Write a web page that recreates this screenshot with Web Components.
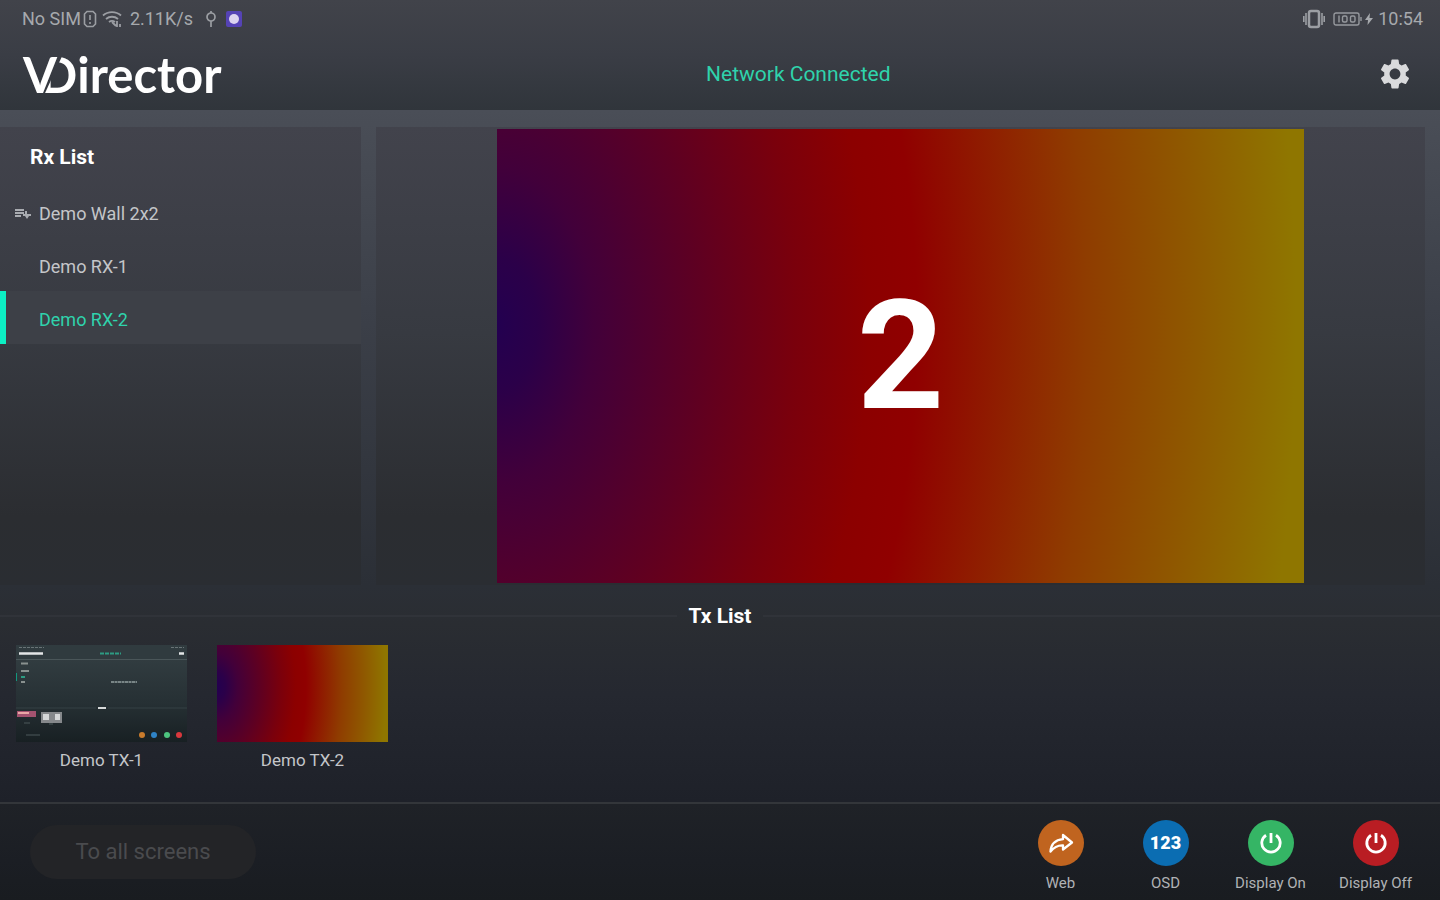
<!DOCTYPE html>
<html lang="en">
<head>
<meta charset="utf-8">
<meta name="viewport" content="width=device-width, initial-scale=1">
<title>VDirector</title>
<style>
html, body { margin: 0; height: 100%; }
body {
  font-family: Roboto, "Liberation Sans", sans-serif;
  color: #c4c6c9;
  background: #1a1d22;
  --accent: #2fd3ac;
  --demo-picture: radial-gradient(ellipse 100% 290% at 0 43%, #230050 0%, #2b0049 5%, #42003a 12%, #5e0022 25%, #7a000c 37%, #8c0000 46%, #900000 52%, #8f3c00 73%, #8f5800 86%, #8f7600 99%);
}
</style>
</head>
<body>
<v-director></v-director>

<script>
const define = (name, html) => {
  const template = document.createElement('template');
  template.innerHTML = '<style>*{box-sizing:border-box}button{font:inherit;color:inherit;border:0;background:none;padding:0;margin:0;cursor:pointer}svg{display:block}</style>' + html;
  customElements.define(name, class extends HTMLElement {
    constructor() {
      super();
      this.attachShadow({ mode: 'open' }).append(template.content.cloneNode(true));
    }
  });
};

/* Device status line */
define('status-bar', `
<style>
:host { display: flex; justify-content: space-between; align-items: center; height: 38px; padding: 0 17px 0 22px; font-size: 18px; line-height: 22px; color: #a6a9ad; }
div { display: flex; align-items: center; }
.sim { margin-left: 2px; }
.wifi { margin: 0 8px 0 5px; }
.usb { margin: 0 8px 0 12px; }
.battery { margin: 0 2px 0 8px; }
.bolt { margin-right: 5px; }
</style>
<div>
  <span>No SIM</span>
  <svg class="sim" width="14" height="18" viewBox="0 0 14 18" fill="none" stroke="#9b9ea3" stroke-width="1.6"><path d="M4 1.5h6L12.500 4v10L10 16.500H4L1.500 14V4z"/><path d="M7 5v5M7 12v2"/></svg>
  <svg class="wifi" width="20" height="18" viewBox="0 0 20 18" fill="none" stroke="#9b9ea3" stroke-width="1.800"><path d="M1 5.500c5-4.500 13-4.500 18 0M4 9c3.500-3 8.500-3 12 0M7 12c2-1.500 4-1.500 6 0"/><path d="M10 12l4 4M15 11v6M18 14v3"/></svg>
  <span>2.11K/s</span>
  <svg class="usb" width="12" height="18" viewBox="0 0 12 18" fill="none" stroke="#9b9ea3" stroke-width="1.700"><circle cx="6" cy="7" r="4"/><path d="M6 1v2M6 11v6"/></svg>
  <svg width="18" height="18" viewBox="0 0 18 18"><rect x="1" y="1" width="16" height="16" rx="2" fill="#5543b5"/><circle cx="9" cy="9" r="5" fill="#dcd3ef"/></svg>
</div>
<div>
  <svg width="22" height="20" viewBox="0 0 22 20" fill="none" stroke="#9b9ea3"><rect x="6" y="2" width="10" height="16" rx="2" stroke-width="2.500"/><path d="M3 4v12M19 4v12M.8 7v6M21.200 7v6" stroke-width="1.600"/></svg>
  <svg class="battery" width="30" height="14" viewBox="0 0 30 14" fill="none" stroke="#96999e" stroke-width="1.400"><rect x="1" y="1" width="25" height="12" rx="2"/><path d="M28 5v4M6 3.500v7"/><rect x="9.500" y="4" width="4.500" height="6" rx="1.500"/><rect x="17.500" y="4" width="4.500" height="6" rx="1.500"/></svg>
  <svg class="bolt" width="8" height="12" viewBox="0 0 8 12" fill="#a6a9ad"><path d="M5 0L0 7h3l-.5 5L8 5H4.500z"/></svg>
  <span>10:54</span>
</div>`);

/* Wordmark: the D is cut on a slant that runs parallel to the V's right arm */
define('app-logo', `
<style>
:host { display: block; font: 700 49px/50px Lato, "Open Sans", sans-serif; color: #fff; white-space: nowrap; }
h1 { margin: 0; font: inherit; display: flex; }
.d { margin-left: -17px; clip-path: polygon(68% 0, 100% 0, 100% 100%, 6% 100%); }
</style>
<h1><span>V</span><span class="d">D</span><span>irector</span></h1>`);

define('app-header', `
<style>
:host { display: block; background: linear-gradient(#41434a, #3a3d45 50%, #30353b); }
.bar { display: flex; justify-content: space-between; align-items: center; height: 72px; padding: 0 25px 0 23px; }
.state { font-size: 21px; line-height: 26px; color: var(--accent); }
button { width: 40px; height: 40px; display: grid; place-items: center; }
</style>
<status-bar></status-bar>
<div class="bar">
  <app-logo></app-logo>
  <span class="state" role="status"><slot></slot></span>
  <button aria-label="Settings"><svg width="36" height="36" viewBox="0 0 24 24" fill="#d9dadc"><path d="M19.140 12.940c.04-.3.06-.61.06-.94 0-.32-.02-.64-.07-.94l2.030-1.580c.18-.14.23-.41.12-.61l-1.920-3.320c-.12-.22-.37-.29-.59-.22l-2.390.96c-.5-.38-1.030-.7-1.620-.94l-.36-2.540c-.04-.24-.24-.41-.48-.41h-3.840c-.24 0-.43.17-.47.41l-.36 2.540c-.59.24-1.130.57-1.620.94l-2.390-.96c-.22-.08-.47 0-.59.22L2.740 8.870c-.12.21-.08.47.12.61l2.030 1.580c-.05.3-.09.63-.09.94s.02.64.07.94l-2.030 1.580c-.18.14-.23.41-.12.61l1.920 3.320c.12.22.37.29.59.22l2.390-.96c.5.38 1.030.7 1.620.94l.36 2.540c.05.24.24.41.48.41h3.840c.24 0 .44-.17.47-.41l.36-2.540c.59-.24 1.130-.56 1.620-.94l2.390.96c.22.08.47 0 .59-.22l1.920-3.320c.12-.22.07-.47-.12-.61l-2.010-1.580zM12 15.600c-1.980 0-3.600-1.620-3.600-3.600s1.620-3.600 3.600-3.600 3.600 1.620 3.600 3.600-1.620 3.600-3.600 3.600z"/></svg></button>
</div>`);

define('rx-item', `
<style>
:host { display: block; }
button { display: flex; align-items: center; width: 100%; height: 53px; padding: 4px 0 0 15px; font-size: 18px; line-height: 22px; text-align: left; }
.icon { width: 24px; }
svg { visibility: hidden; }
:host([wall]) svg { visibility: visible; }
:host([selected]) button { color: var(--accent); background: #3d4047; box-shadow: inset 6px 0 #0cf0c4; }
</style>
<button><span class="icon"><svg width="16" height="14" viewBox="0 0 16 14" fill="#a9acb1"><path d="M0 2h9v2H0zM0 5h9v2H0zM0 8h6v2H0zM10 4l2 0v3h4v2h-2l-2 3-2-3H8V7h2z"/></svg></span><slot></slot></button>`);

define('rx-list', `
<style>
:host { display: block; background: linear-gradient(#42434c, #373a41 45%, #2b2d31 85%, #2a2d32); }
h2 { margin: 0; padding: 18px 30px 16px; font-size: 21px; line-height: 24px; font-weight: 700; color: #fff; }
nav { display: block; }
</style>
<h2>Rx List</h2>
<nav aria-label="Rx List"><slot></slot></nav>`);

define('rx-preview', `
<style>
:host { display: flex; justify-content: center; align-items: center; min-width: 0; padding: 2px; background: linear-gradient(#42434c, #373a41 45%, #2b2d31 85%, #2a2d32); }
.picture { height: 100%; max-width: 100%; aspect-ratio: 16 / 9; display: grid; place-items: center; background: var(--demo-picture); color: #fff; font-size: 152px; line-height: 180px; font-weight: 700; }
</style>
<div class="picture"><slot></slot></div>`);

define('tx-item', `
<style>
:host { display: block; width: 171px; }
button { display: block; width: 100%; text-align: center; font-size: 17px; line-height: 22px; }
.thumb { display: block; width: 100%; aspect-ratio: 171 / 97; margin-bottom: 7px; background: var(--demo-picture); }
</style>
<button><slot name="thumb"><span class="thumb"></span></slot><slot></slot></button>`);

/* Miniature of the app's own screen, shown by the first transmitter */
define('screen-thumb', `
<style>:host { display: block; width: 171px; height: 97px; margin-bottom: 7px; }</style>
<svg width="171" height="97" viewBox="0 0 171 97">
  <defs><linearGradient id="g" x2="0" y2="1"><stop stop-color="#354044"/><stop offset=".6" stop-color="#263034"/><stop offset="1" stop-color="#182023"/></linearGradient></defs>
  <rect width="171" height="97" fill="url(#g)"/>
  <rect width="171" height="14" fill="#303b3f"/>
  <path d="M0 14.500h171" stroke="#4a5659"/>
  <path d="M3 2.500h25M155 2.500h13" stroke="#697477" stroke-dasharray="3 1"/>
  <path d="M3 8.500h24M163 8.500h5" stroke="#e3e6e7" stroke-width="2.500"/>
  <path d="M84 8.500h21" stroke="#2d9c83" stroke-width="2" stroke-dasharray="4 1"/>
  <path d="M5 18.500h7M5 26h8M5 37h4" stroke="#89918f" stroke-width="2"/>
  <path d="M.5 28v8" stroke="#12977e"/><path d="M5 32h4" stroke="#2d9c83" stroke-width="2"/>
  <path d="M95 37h26" stroke="#93a0a0" stroke-width="1.500" stroke-dasharray="3 .5"/>
  <path d="M0 63h80M92 63h79" stroke="#354144"/><path d="M82 63h8" stroke="#d7dada" stroke-width="2"/>
  <rect x="1" y="66" width="19" height="6" fill="#a3526f"/><path d="M2 68h11" stroke="#e9a7a6" stroke-width="2"/>
  <rect x="25" y="67" width="21" height="11" fill="#85888b"/><path d="M27 72h6M39 72h5" stroke="#d5d7d8" stroke-width="6"/><path d="M33 79h4M8 78h6M10 90h14" stroke="#4c585a"/>
  <circle cx="126" cy="90" r="3" fill="#c97b2c"/><circle cx="138" cy="90" r="3" fill="#2f83c6"/><circle cx="151" cy="90" r="3" fill="#4dc47f"/><circle cx="163" cy="90" r="3" fill="#d9383d"/>
</svg>`);

define('tx-list', `
<style>
:host { display: block; height: 217px; background: linear-gradient(#2b2f36, #2a2d32 18%, #252830 50%, #1e2129); }
h2 { display: flex; align-items: center; gap: 12px; margin: 0; padding-top: 19px; font-size: 21px; line-height: 24px; font-weight: 700; color: #fff; }
h2::before, h2::after { content: ""; flex: 1; height: 2px; background: #303339; }
.items { display: flex; gap: 30px; padding: 17px 16px 0; }
</style>
<h2>Tx List</h2>
<div class="items"><slot></slot></div>`);

define('round-action', `
<style>
:host { display: block; width: 105px; }
button { display: flex; flex-direction: column; align-items: center; gap: 8px; width: 100%; font-size: 15px; line-height: 18px; color: #b0b2b5; white-space: nowrap; }
.disc { display: grid; place-items: center; width: 46px; height: 46px; border-radius: 50%; background: var(--disc); color: #fff; font-size: 18px; font-weight: 900; }
</style>
<button><span class="disc"><slot name="icon"></slot></span><slot></slot></button>`);

define('power-icon', `
<style>:host { display: block; }</style>
<svg width="24" height="24" viewBox="0 0 24 24" fill="none" stroke="#fff" stroke-width="2.800"><path d="M7 4.200a9.200 9.200 0 1 0 10 0M12 2v10"/></svg>`);

define('share-icon', `
<style>:host { display: block; }</style>
<svg width="26" height="24" viewBox="0 0 26 24" fill="none" stroke="#fff" stroke-width="2.300" stroke-linejoin="round"><path d="M15 4l9 7.500-9 7v-4.200c-5.500-.3-9 1.700-12.500 6.200C3 13.500 7 9 15 8.200z"/></svg>`);

define('app-footer', `
<style>
:host { display: flex; justify-content: space-between; align-items: flex-start; height: 98px; padding: 0 12px 0 30px; border-top: 2px solid #33363a; background: linear-gradient(#1f2227, #1b1e24 60%, #191c20); }
.all { margin-top: 21px; width: 226px; height: 54px; border-radius: 27px; background: #232427; color: #4a4b4e; font-size: 22px; line-height: 26px; }
.actions { display: flex; padding-top: 16px; }
</style>
<button class="all" aria-disabled="true">To all screens</button>
<div class="actions"><slot></slot></div>`);

define('v-director', `
<style>
:host { display: flex; flex-direction: column; min-height: 100vh; }
main { flex: 1; display: grid; grid-template-columns: minmax(0, 361fr) minmax(0, 1049fr); column-gap: 15px; padding: 17px 15px 0 0; background: linear-gradient(#4a4e57, #3b3f48 45%, #2b2f36); }
rx-preview { height: calc(100vh - 442px); min-height: 260px; }
.web { --disc: #c0641f; } .osd { --disc: #0b6db2; } .on { --disc: #35b565; } .off { --disc: #b91d23; }
</style>
<app-header>Network Connected</app-header>
<main>
  <rx-list>
    <rx-item wall>Demo Wall 2x2</rx-item>
    <rx-item>Demo RX-1</rx-item>
    <rx-item selected>Demo RX-2</rx-item>
  </rx-list>
  <rx-preview>2</rx-preview>
</main>
<tx-list>
  <tx-item><screen-thumb slot="thumb"></screen-thumb>Demo TX-1</tx-item>
  <tx-item>Demo TX-2</tx-item>
</tx-list>
<app-footer>
  <round-action class="web"><share-icon slot="icon"></share-icon>Web</round-action>
  <round-action class="osd"><span slot="icon">123</span>OSD</round-action>
  <round-action class="on"><power-icon slot="icon"></power-icon>Display On</round-action>
  <round-action class="off"><power-icon slot="icon"></power-icon>Display Off</round-action>
</app-footer>`);
</script>
</body>
</html>
